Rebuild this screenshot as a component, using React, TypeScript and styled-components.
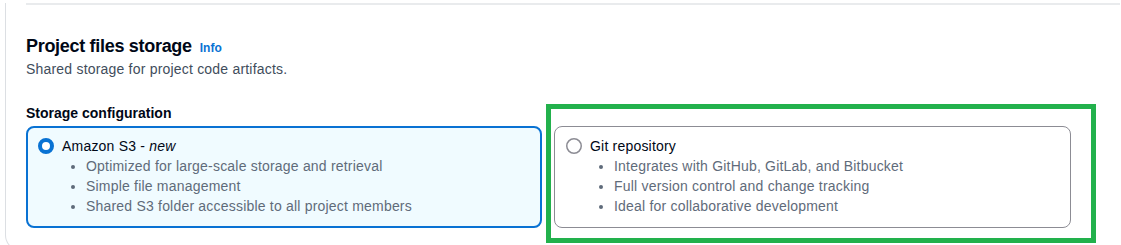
import React from 'react'
import styled, { createGlobalStyle } from 'styled-components'

const colors = {
  heading: '#000716',
  text: '#414d5c',
  bullet: '#5f6b7a',
  link: '#0972d3',
  selectedBg: '#f0fbff',
  tileBorder: '#8c8c94',
  divider: '#e9ebed',
  cardBorder: '#dcdfe3',
  annotation: '#22b14c',
}

const GlobalStyle = createGlobalStyle`
  html, body {
    margin: 0;
    padding: 0;
    background: #ffffff;
    overflow: hidden;
  }
  body {
    font-family: 'Liberation Sans', Arial, sans-serif;
    -webkit-font-smoothing: antialiased;
  }
`

const Page = styled.div`
  position: relative;
  width: 1121px;
  height: 245px;
  overflow: hidden;
`

const Card = styled.section`
  box-sizing: border-box;
  width: 1136px;
  height: 248px;
  margin-left: 5px;
  padding: 0 20px;
  border: 1px solid ${colors.cardBorder};
  border-top: none;
  border-radius: 0 0 16px 16px;
`

const Divider = styled.div`
  height: 2px;
  margin-top: 3px;
  background: ${colors.divider};
`

const HeaderRow = styled.div`
  display: flex;
  align-items: baseline;
  gap: 8px;
  margin-top: 30px;
`

const Title = styled.h2`
  margin: 0;
  font-size: 18px;
  line-height: 22px;
  font-weight: 700;
  letter-spacing: -0.3px;
  color: ${colors.heading};
`

const InfoLink = styled.a`
  font-size: 12px;
  line-height: 16px;
  font-weight: 700;
  color: ${colors.link};
  text-decoration: none;
`

const Description = styled.p`
  margin: 2px 0 0;
  font-size: 14px;
  line-height: 20px;
  letter-spacing: 0.2px;
  color: ${colors.text};
`

const FieldLabel = styled.div`
  margin-top: 24px;
  font-size: 14px;
  line-height: 20px;
  font-weight: 700;
  color: ${colors.heading};
`

const TileGrid = styled.div`
  display: grid;
  grid-template-columns: 516px 517px;
  gap: 12px;
  margin-top: 3px;
`

const Tile = styled.label<{ $selected?: boolean }>`
  box-sizing: border-box;
  height: 102px;
  display: flex;
  align-items: flex-start;
  gap: 8px;
  padding: ${(p) => (p.$selected ? '8px 10px 10px 10px' : '9px 11px 11px 11px')};
  border: ${(p) => (p.$selected ? `2px solid ${colors.link}` : `1px solid ${colors.tileBorder}`)};
  border-radius: 8px;
  background: ${(p) => (p.$selected ? colors.selectedBg : '#ffffff')};
  cursor: pointer;
`

const RadioWrap = styled.span`
  flex: none;
  display: flex;
  align-items: center;
  height: 20px;
`

const TileBody = styled.div`
  display: flex;
  flex-direction: column;
`

const TileTitle = styled.span`
  font-size: 14px;
  line-height: 20px;
  letter-spacing: 0.2px;
  color: ${colors.heading};

  em {
    font-style: italic;
  }
`

const BulletList = styled.ul`
  margin: 0;
  padding-left: 24px;
  list-style: disc;
`

const Bullet = styled.li`
  font-size: 14px;
  line-height: 20px;
  letter-spacing: 0.2px;
  color: ${colors.bullet};
`

const Annotation = styled.div`
  position: absolute;
  left: 546px;
  top: 104px;
  width: 550px;
  height: 139px;
  box-sizing: border-box;
  border: 5px solid ${colors.annotation};
  pointer-events: none;
`

const Radio = ({ checked }: { checked?: boolean }) => (
  <svg width="16" height="16" viewBox="0 0 16 16" aria-hidden="true">
    {checked ? (
      <circle cx="8" cy="8" r="6" fill="#ffffff" stroke={colors.link} strokeWidth="4" />
    ) : (
      <circle cx="8" cy="8" r="7.25" fill="#ffffff" stroke={colors.tileBorder} strokeWidth="1.5" />
    )}
  </svg>
)

const options = [
  {
    id: 's3',
    title: (
      <>
        Amazon S3 - <em>new</em>
      </>
    ),
    bullets: [
      'Optimized for large-scale storage and retrieval',
      'Simple file management',
      'Shared S3 folder accessible to all project members',
    ],
    selected: true,
  },
  {
    id: 'git',
    title: <>Git repository</>,
    bullets: [
      'Integrates with GitHub, GitLab, and Bitbucket',
      'Full version control and change tracking',
      'Ideal for collaborative development',
    ],
    selected: false,
  },
]

export default function App() {
  return (
    <Page>
      <GlobalStyle />
      <Card>
        <Divider />
        <HeaderRow>
          <Title>Project files storage</Title>
          <InfoLink href="#">Info</InfoLink>
        </HeaderRow>
        <Description>Shared storage for project code artifacts.</Description>
        <FieldLabel>Storage configuration</FieldLabel>
        <TileGrid>
          {options.map((o) => (
            <Tile key={o.id} $selected={o.selected}>
              <RadioWrap>
                <Radio checked={o.selected} />
              </RadioWrap>
              <TileBody>
                <TileTitle>{o.title}</TileTitle>
                <BulletList>
                  {o.bullets.map((b) => (
                    <Bullet key={b}>{b}</Bullet>
                  ))}
                </BulletList>
              </TileBody>
            </Tile>
          ))}
        </TileGrid>
      </Card>
      <Annotation />
    </Page>
  )
}
